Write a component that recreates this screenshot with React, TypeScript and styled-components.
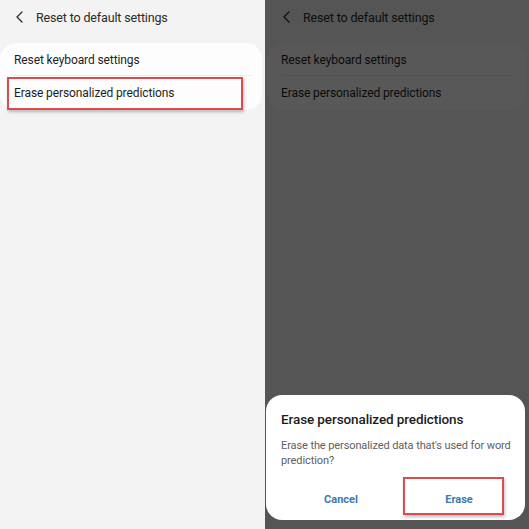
import styled, { createGlobalStyle } from "styled-components";

const GlobalStyle = createGlobalStyle`
  html, body {
    margin: 0;
    padding: 0;
    width: 529px;
    height: 529px;
    overflow: hidden;
    font-family: Roboto, "Noto Sans", "Liberation Sans", sans-serif;
  }
`;

export const Page = styled.div`
  width: 529px;
  height: 529px;
  display: flex;
`;

export const Panel = styled.div<{ $width: number }>`
  position: relative;
  width: ${(p) => p.$width}px;
  height: 100%;
  background: #f3f3f3;
  overflow: hidden;
`;

export const Screen = styled.div<{ $shift: number }>`
  display: flex;
  flex-direction: column;
  padding-left: ${(p) => p.$shift}px;
`;

export const Header = styled.div`
  height: 34px;
  display: flex;
  align-items: center;
  padding-left: 16px;
  gap: 13px;
  color: #2a2a2a;
  font-size: 12.5px;
  letter-spacing: -0.15px;
`;

export const Card = styled.div`
  margin: 9px 3px 0 0;
  background: #fdfdfd;
  border-radius: 16px;
  display: flex;
  flex-direction: column;
`;

export const Row = styled.div<{ $divider?: boolean; $h: number }>`
  position: relative;
  height: ${(p) => p.$h}px;
  display: flex;
  align-items: center;
  padding-left: 14px;
  font-size: 12px;
  letter-spacing: -0.1px;
  color: #1e1e1e;
  &::after {
    content: "";
    display: ${(p) => (p.$divider ? "block" : "none")};
    position: absolute;
    left: 14px;
    right: 10px;
    bottom: 0;
    height: 1px;
    background: #ececec;
  }
`;

export const Highlight = styled.div<{ $left: number; $top: number; $w: number; $h: number }>`
  position: absolute;
  left: ${(p) => p.$left}px;
  top: ${(p) => p.$top}px;
  width: ${(p) => p.$w}px;
  height: ${(p) => p.$h}px;
  box-sizing: border-box;
  border: 2px solid #dc4b4d;
  box-shadow: 1px 2px 3px rgba(0, 0, 0, 0.25);
  pointer-events: none;
`;

export const Dim = styled.div`
  position: absolute;
  inset: 0;
  background: rgba(0, 0, 0, 0.65);
`;

export const Dialog = styled.div`
  position: absolute;
  left: 1px;
  right: 4px;
  bottom: 9px;
  height: 125px;
  box-sizing: border-box;
  background: #ffffff;
  border-radius: 16px;
  padding: 14px 0 0 0;
  display: flex;
  flex-direction: column;
`;

export const DialogTitle = styled.div`
  padding-left: 15px;
  font-size: 13.5px;
  font-weight: 500;
  color: #1c1c1c;
  letter-spacing: -0.1px;
  line-height: 20px;
`;

export const DialogBody = styled.div`
  margin-top: 9px;
  padding: 0 4px 0 15px;
  font-size: 11px;
  line-height: 15px;
  color: #5e5e5e;
  letter-spacing: -0.1px;
`;

export const Buttons = styled.div`
  margin-top: 9px;
  display: grid;
  grid-template-columns: 118px 118px;
  padding-left: 16px;
`;

export const DialogButton = styled.div`
  position: relative;
  height: 38px;
  display: flex;
  align-items: center;
  justify-content: center;
  padding-top: 6px;
  box-sizing: border-box;
  font-size: 11px;
  font-weight: 700;
  color: #3a78b3;
`;

const Chevron = () => (
  <svg width="7" height="12" viewBox="0 0 7 12" fill="none">
    <path d="M6 1 L1 6 L6 11" stroke="#2a2a2a" strokeWidth="1.3" strokeLinecap="round" strokeLinejoin="round" />
  </svg>
);

const SettingsScreen = ({ shift, mark }: { shift: number; mark?: boolean }) => (
  <Screen $shift={shift}>
    <Header>
      <Chevron />
      <span>Reset to default settings</span>
    </Header>
    <Card>
      <Row $divider $h={33}>Reset keyboard settings</Row>
      <Row $h={34}>
        Erase personalized predictions
        {mark && <Highlight $left={7} $top={1} $w={236} $h={33} />}
      </Row>
    </Card>
  </Screen>
);

export default function App() {
  return (
    <>
      <GlobalStyle />
      <Page>
        <Panel $width={265}>
          <SettingsScreen shift={0} mark />
        </Panel>
        <Panel $width={264}>
          <SettingsScreen shift={2} />
          <Dim />
          <Dialog>
            <DialogTitle>Erase personalized predictions</DialogTitle>
            <DialogBody>Erase the personalized data that's used for word prediction?</DialogBody>
            <Buttons>
              <DialogButton>Cancel</DialogButton>
              <DialogButton>
                Erase
                <Highlight $left={3} $top={0} $w={101} $h={38} />
              </DialogButton>
            </Buttons>
          </Dialog>
        </Panel>
      </Page>
    </>
  );
}
